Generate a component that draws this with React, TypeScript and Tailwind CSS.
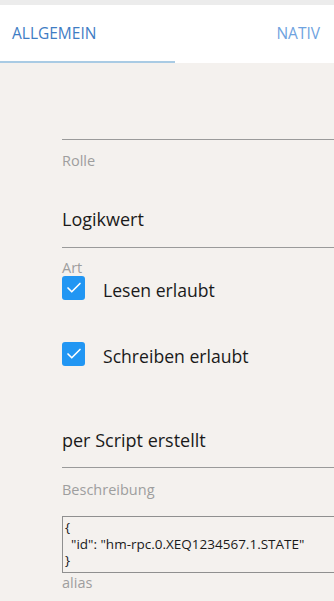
import { Check } from "lucide-react";

const font = { fontFamily: '"Open Sans", "Noto Sans", sans-serif' };

function Checkbox({ label }: { label: string }) {
  return (
    <label className="flex h-[24px] items-center">
      <span className="flex h-[24px] w-[23px] shrink-0 items-center justify-center rounded-[3px] bg-[#2196f3]">
        <Check size={18} strokeWidth={2.2} className="text-white" />
      </span>
      <span className="ml-[18px] mt-[5px] text-[17.6px] leading-none text-[#1a1a1a]">{label}</span>
    </label>
  );
}

export default function App() {
  return (
    <div className="h-[601px] w-[334px] overflow-hidden bg-[#f4f1ee]" style={font}>
      <div className="h-[5px] bg-[#ececec]" />
      <div className="relative flex h-[58px] items-center bg-white">
        <div className="flex h-full w-[175px] items-center pl-[12px] text-[15.5px] text-[#3f7dc4]">ALLGEMEIN</div>
        <div className="ml-auto pr-[14px] text-[15.5px] text-[#6fa3e0]">NATIV</div>
        <div className="absolute bottom-0 left-0 h-[2px] w-[175px] bg-[#a9cbe4]" />
      </div>

      <div className="pl-[62px]">
        <div className="mt-[76px] h-px bg-[#9a9a9a]" />
        <div className="mt-[12px] text-[14.5px] leading-[17px] text-[#9e9e9e]">Rolle</div>
        <div className="mt-[40px] text-[18px] leading-[21px] text-[#1a1a1a]">Logikwert</div>
        <div className="mt-[17px] h-px bg-[#9a9a9a]" />
        <div className="mt-[11px] h-[14px] text-[14.5px] leading-[17px] text-[#9e9e9e]">Art</div>
        <div className="mt-[3px]">
          <Checkbox label="Lesen erlaubt" />
        </div>
        <div className="mt-[42px]">
          <Checkbox label="Schreiben erlaubt" />
        </div>
        <div className="mt-[64px] text-[18px] leading-[21px] text-[#1a1a1a]">per Script erstellt</div>
        <div className="mt-[16px] h-px bg-[#9a9a9a]" />
        <div className="mt-[13px] text-[14.5px] leading-[17px] text-[#9e9e9e]">Beschreibung</div>
        <div className="mt-[18px] h-[57px] border border-r-0 border-[#8f8f8f] px-[2px] pt-[2px] text-[13.5px] leading-[16.5px] text-[#1a1a1a]">
          <div>{"{"}</div>
          <div className="pl-[6px]">"id": "hm-rpc.0.XEQ1234567.1.STATE"</div>
          <div>{"}"}</div>
        </div>
        <div className="mt-[1px] text-[14.5px] leading-[17px] text-[#9e9e9e]">alias</div>
      </div>
    </div>
  );
}
